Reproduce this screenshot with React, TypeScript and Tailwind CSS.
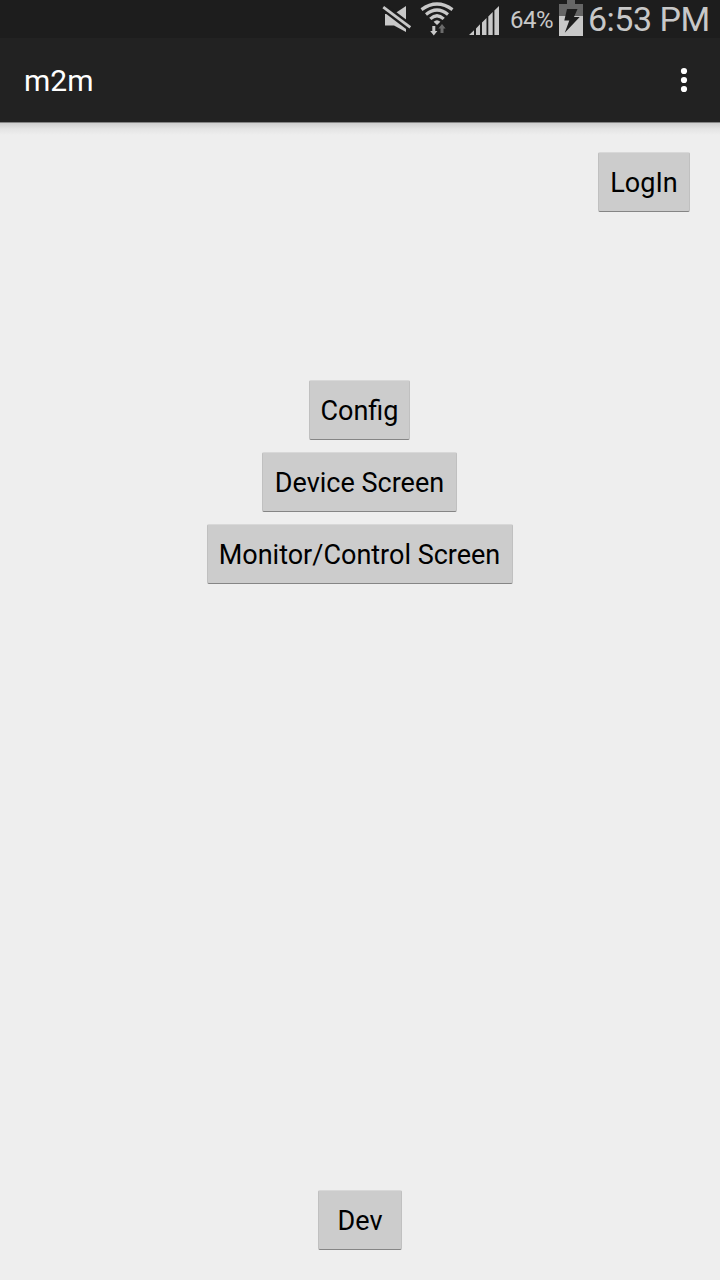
import type { ReactNode } from 'react';

function MuteIcon() {
  return (
    <svg width="32" height="38" viewBox="381 0 32 38" className="shrink-0">
      <path d="M385 14H394L406 6V32L394 25.5H385Z" fill="#c8c8c8" />
      <path d="M382 6L411 28" stroke="#1d1d1d" strokeWidth="7.6" />
      <path d="M383.3 7.2L410.3 27.3" stroke="#c8c8c8" strokeWidth="2.8" />
    </svg>
  );
}

function WifiIcon() {
  return (
    <svg width="36" height="38" viewBox="419 0 36 38" className="shrink-0">
      <g fill="none" stroke="#c8c8c8" strokeWidth="3.2">
        <path d="M421.5 9.6Q437 -1.6 452.5 9.6" />
        <path d="M426 14.4Q437 5.6 448 14.4" />
        <path d="M430.3 18.9Q437 12.6 443.7 18.9" />
      </g>
      <path d="M433.6 21.8Q437 18.8 440.4 21.8L437 25Z" fill="#c8c8c8" />
      <path d="M432.3 26H435.3V31H437.4L433.8 35.5L430.2 31H432.3Z" fill="#c8c8c8" />
      <path d="M440.5 33H443.5V28.5H445.6L442 24L438.4 28.5H440.5Z" fill="#6b6b6b" />
    </svg>
  );
}

function SignalIcon() {
  return (
    <svg width="31" height="38" viewBox="469 0 31 38" className="shrink-0">
      <path
        d="M469 35L474 30.2V35ZM476 28.6L480 24.3V35H476ZM482 22.4L486.5 18V35H482ZM488.3 16.4L492.7 12V35H488.3ZM494.4 10.4L499 6V35H494.4Z"
        fill="#c8c8c8"
      />
    </svg>
  );
}

function BatteryIcon() {
  return (
    <svg width="24" height="38" viewBox="559 0 24 38" className="shrink-0">
      <path d="M567 0H575V4H583V16H559V4H567Z" fill="#666" />
      <path d="M559 16H583V36H559Z" fill="#c8c8c8" />
      <path d="M567 9H577.5L574 17H579.7L564.8 32.7L569.3 20.5H564.3Z" fill="#1d1d1d" />
    </svg>
  );
}

function Button({ width, children }: { width: string; children: ReactNode }) {
  return (
    <button
      className={`flex h-[60px] items-center justify-center whitespace-nowrap rounded-[2px] border border-t-[#d8d8d8] border-x-[#c0c0c0] border-b-[#858585] bg-[#ccc] pt-px text-[27px] leading-8 text-black ${width}`}
    >
      {children}
    </button>
  );
}

export default function App() {
  return (
    <div className="flex h-[1280px] w-[720px] flex-col overflow-hidden bg-[#eee] font-[Roboto,sans-serif]">
      <div className="flex h-[38px] shrink-0 items-center bg-[#1d1d1d] pl-[381px] text-[#c8c8c8]">
        <MuteIcon />
        <div className="ml-1.5"><WifiIcon /></div>
        <div className="ml-3.5"><SignalIcon /></div>
        <span className="ml-2.5 w-[49px] whitespace-nowrap pt-px text-[24px] leading-9 tracking-[-0.5px]">64%</span>
        <BatteryIcon />
        <span className="ml-[5px] whitespace-nowrap text-[34px] leading-9 tracking-[-0.5px]">6:53 PM</span>
      </div>
      <header className="flex h-[84px] shrink-0 items-center justify-between bg-[#222] pl-6 pr-8 text-white">
        <h1 className="pt-0.5 text-[30px] leading-9">m2m</h1>
        <svg width="8" height="26" viewBox="0 0 8 26" fill="#fff">
          <circle cx="4" cy="4" r="3.1" />
          <circle cx="4" cy="13" r="3.1" />
          <circle cx="4" cy="22" r="3.1" />
        </svg>
      </header>
      <div className="h-px shrink-0 bg-[#858585]" />
      <div className="h-3 shrink-0 bg-linear-to-b from-[#cecece] via-[#e4e4e4] to-[#eee]" />
      <main className="flex grow flex-col pt-[17px] pb-[30px]">
        <div className="flex justify-end pr-[30px]">
          <Button width="w-[92px]">LogIn</Button>
        </div>
        <div className="mt-[168px] flex flex-col items-center gap-3 pr-px">
          <Button width="w-[101px]">Config</Button>
          <Button width="w-[195px]">Device Screen</Button>
          <Button width="w-[306px]">Monitor/Control Screen</Button>
        </div>
        <div className="mt-auto flex justify-center">
          <Button width="w-[84px]">Dev</Button>
        </div>
      </main>
    </div>
  );
}
